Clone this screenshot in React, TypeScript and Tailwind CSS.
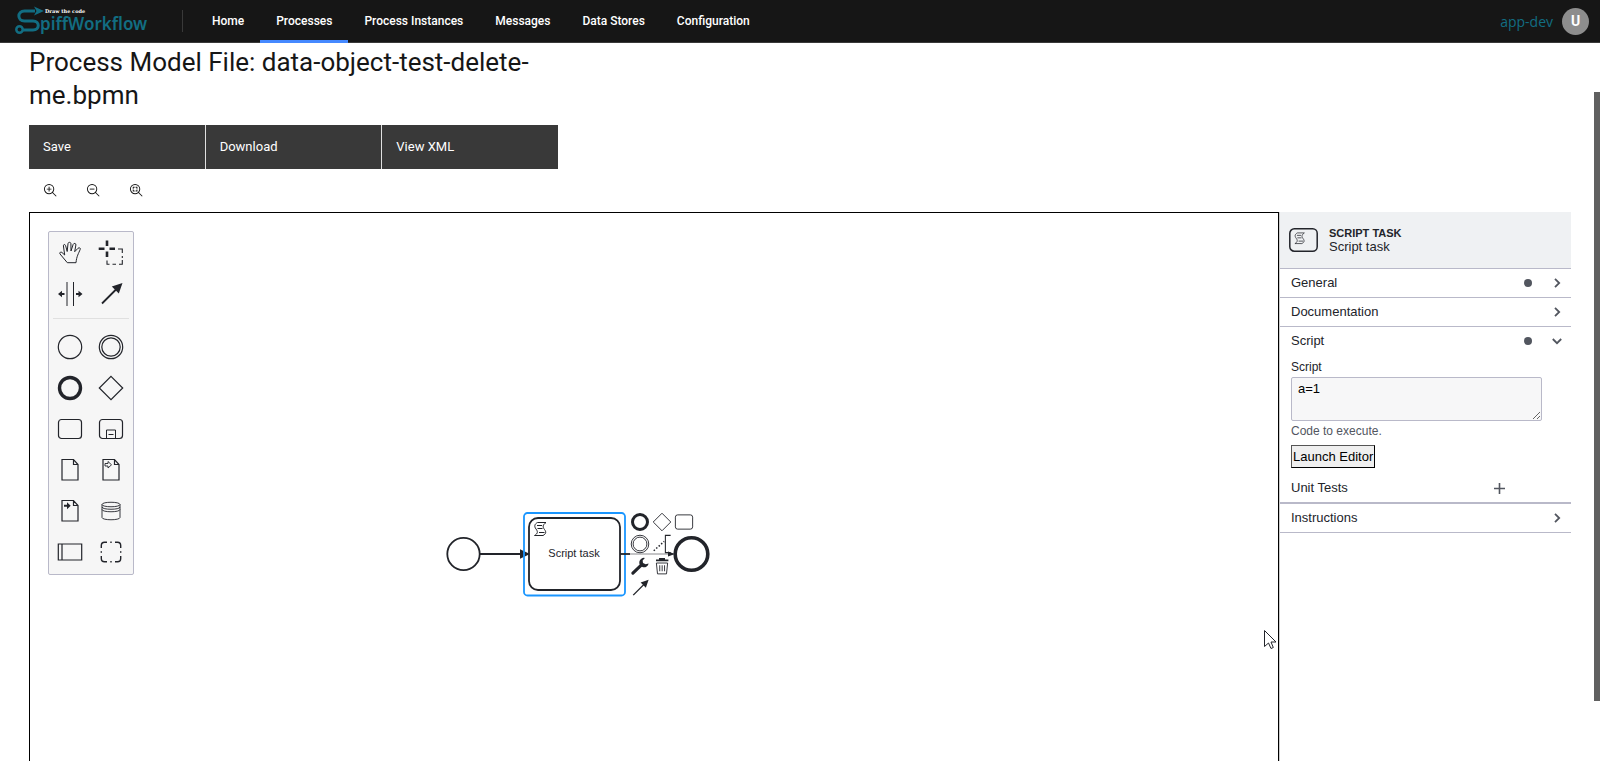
import type { ReactNode } from 'react';

const INK = '#22242a';

const navItems = ['Home', 'Processes', 'Process Instances', 'Messages', 'Data Stores', 'Configuration'];

function Logo() {
  return (
    <svg width="138" height="30" viewBox="0 0 138 30" role="img" aria-label="SpiffWorkflow">
      <g fill="none" stroke="#126d82" strokeWidth="3">
        <path d="M20 5H9.500C2 5 2 15 9.500 15H18C25 15 25 24 18 24H8" />
        <circle cx="4.500" cy="23.500" r="3.200" strokeWidth="2.500" />
      </g>
      <path d="M19 0.500L29 5L19 9.500L21.500 5Z" fill="#126d82" />
      <text x="30" y="7" className="fill-white font-['DejaVu_Serif'] text-[5px] font-bold">Draw the code</text>
      <text x="25" y="24" className="fill-[#126d82] font-['Noto_Sans'] text-[17px] font-semibold">piffWorkflow</text>
    </svg>
  );
}

function Header() {
  return (
    <header className="flex h-[43px] shrink-0 items-stretch border-b border-[#393939] bg-[#161616] pl-[15px] pr-[11px] text-white">
      <a href="#home" className="flex items-center">
        <Logo />
      </a>
      <div className="ml-[29px] mr-[13px] h-[22px] w-px self-center bg-[#393939]" />
      <nav className="-mb-px flex items-stretch text-[12px] font-medium">
        {navItems.map((item) => (
          <a
            key={item}
            href="#nav"
            className={
              item === 'Processes'
                ? 'flex items-center border-b-[3px] border-[#4589ff] px-4 pt-[2px]'
                : 'flex items-center border-b-[3px] border-transparent px-4 pt-[2px]'
            }
          >
            {item}
          </a>
        ))}
      </nav>
      <div className="ml-auto flex items-center gap-[9px]">
        <span className="font-['Open_Sans'] text-[14px] text-[#126d82]">app-dev</span>
        <button type="button" className="flex size-[27px] items-center justify-center rounded-full bg-[#8d8d8d] text-[14px] font-bold">
          U
        </button>
      </div>
    </header>
  );
}

function ZoomIcon({ children }: { children: ReactNode }) {
  return (
    <svg width="15" height="15" viewBox="0 0 32 32" fill="#161616">
      <path d="M21.4479,20A10.856,10.856,0,0,0,24,13,11,11,0,1,0,13,24a10.856,10.856,0,0,0,7-2.5521L27.5859,29,29,27.5859ZM13,22a9,9,0,1,1,9-9A9.01,9.01,0,0,1,13,22Z" />
      {children}
    </svg>
  );
}

function ZoomBar() {
  const button = 'flex h-[43px] w-[43px] items-center justify-center';
  return (
    <div className="flex">
      <button type="button" aria-label="Zoom in" className={button}>
        <ZoomIcon>
          <path d="M18 12h-4V8h-2v4H8v2h4v4h2v-4h4z" />
        </ZoomIcon>
      </button>
      <button type="button" aria-label="Zoom out" className={button}>
        <ZoomIcon>
          <path d="M8 12h10v2H8z" />
        </ZoomIcon>
      </button>
      <button type="button" aria-label="Zoom to fit" className={button}>
        <ZoomIcon>
          <path d="M8 8h4v2h-2v2H8zM14 8h4v4h-2v-2h-2zM8 14h2v2h2v2H8zM16 14h2v4h-4v-2h2z" />
        </ZoomIcon>
      </button>
    </div>
  );
}

const page = 'M4 1.500H15.500L20 6.500V22H4Z M15.500 1.500V6.500H20';

const icons: Record<string, ReactNode> = {
  'Hand tool': (
    <path
      d="M9.300 21.700L1.900 12.800C1.200 11.400 3 10.500 4 11.500L6.700 14L5.400 4.800C5.300 3.200 7.200 3.100 7.600 4.600L9.200 10.500L10 2.600C10.200 0.900 12.800 0.900 12.900 2.600L13 10L15.200 3.300C15.800 1.800 18.200 2.300 17.900 3.900L16.700 10.700L20 7.300C21.200 6.200 22.800 7 22.200 8.400C20.600 12.400 18.600 15.200 18 21.700Z"
      strokeWidth="1"
    />
  ),
  'Lasso tool': (
    <>
      <path d="M8 -0.500V5M8 10.500V16M-0.300 7.700H5.500M10.500 7.700H16" strokeWidth="2.600" />
      <path d="M19 8H23.300V12M23.300 15V17M23.300 19V23.300H20M17 23.300H13.500M10.500 23.300H8V19.500" strokeWidth="1.100" />
    </>
  ),
  'Space tool': (
    <>
      <path d="M9 0V24M15.500 0V24" strokeWidth="1" />
      <path d="M0 12L4 8.800V11H6.500V13H4V15.200ZM24.500 12L20.500 8.800V11H18V13H20.500V15.200Z" fill={INK} stroke="none" />
    </>
  ),
  'Connect tool': (
    <>
      <path d="M3 21.500L17 7.500" strokeWidth="1.800" />
      <path d="M23.500 1L19.800 11.500L12.800 4.500Z" fill={INK} stroke="none" />
    </>
  ),
  'Start event': <circle cx="12" cy="12" r="11.700" strokeWidth="1.200" />,
  'Intermediate event': (
    <>
      <circle cx="12" cy="12" r="11.700" strokeWidth="1.200" />
      <circle cx="12" cy="12" r="9.200" strokeWidth="1.200" />
    </>
  ),
  'End event': <circle cx="12" cy="12" r="10.500" strokeWidth="3.400" />,
  Gateway: <path d="M12 0.300L23.700 12L12 23.700L0.300 12Z" strokeWidth="1.200" />,
  Task: <rect x="0.500" y="2.500" width="23" height="19" rx="3" strokeWidth="1.200" />,
  'Sub-process': (
    <>
      <rect x="0.500" y="2.500" width="23" height="19" rx="3" strokeWidth="1.200" />
      <path d="M7.500 21.500V13H16.500V21.500M9.500 17.500H14.500" strokeWidth="1" />
    </>
  ),
  'Data object': <path d={page} strokeWidth="1.200" />,
  'Data input': (
    <>
      <path d={page} strokeWidth="1.200" />
      <path d="M6 5.500H9V3.500L12.500 6.800L9 10V8H6Z" strokeWidth="0.900" />
    </>
  ),
  'Data output': (
    <>
      <path d={page} strokeWidth="1.200" />
      <path d="M6 5.800H9V3.300L12.700 6.800L9 10.300V7.800H6Z" fill={INK} stroke="none" />
    </>
  ),
  'Data store': (
    <path
      d="M3 5.500C3 2.500 21 2.500 21 5.500V18.500C21 21.500 3 21.500 3 18.500ZM3 5.500C3 8.500 21 8.500 21 5.500M3 8C3 11 21 11 21 8M3 10.500C3 13.500 21 13.500 21 10.500"
      strokeWidth="0.900"
    />
  ),
  Participant: <path d="M0.300 4H23.700V20H0.300ZM4 4V20" strokeWidth="1.200" />,
  Group: (
    <path
      d="M2.300 8V5.500Q2.300 2.300 5.500 2.300H8M16 2.300H18.500Q21.700 2.300 21.700 5.500V8M21.700 16V18.500Q21.700 21.700 18.500 21.700H16M8 21.700H5.500Q2.300 21.700 2.300 18.500V16M11.300 2.300H12.700M11.300 21.700H12.700M2.300 11.300V12.700M21.700 11.300V12.700"
      strokeWidth="1.400"
    />
  ),
};

function PaletteIcon({ name }: { name: string }) {
  return (
    <button type="button" title={name} aria-label={name} className="flex h-[41px] items-center justify-center">
      <svg width="24" height="24" viewBox="0 0 24 24" fill="none" stroke={INK} className="overflow-visible">
        {icons[name]}
      </svg>
    </button>
  );
}

function Palette() {
  const names = Object.keys(icons);
  return (
    <div className="absolute left-[18px] top-[18px] w-[86px] rounded-[2px] border border-[#b9b9c9] bg-[#f6f6f6] pb-[2px] pr-[2px]">
      <div className="grid grid-cols-2">
        {names.slice(0, 4).map((n) => (
          <PaletteIcon key={n} name={n} />
        ))}
      </div>
      <hr className="mb-[7px] ml-1 mr-[2px] mt-1 border-[#e0e0e0]" />
      <div className="grid grid-cols-2">
        {names.slice(4).map((n) => (
          <PaletteIcon key={n} name={n} />
        ))}
      </div>
    </div>
  );
}

function ScriptGlyph() {
  return (
    <path d="M3.500 0.500H12C8.500 3 8.500 5 10.500 7.500C12.500 10 12 12 9 13.500H0.500C4 11.500 4 9.500 2 7C0 4.500 0.500 2 3.500 0.500ZM3 3.500H8M3.500 6.500H8.500M5 10.500H10.500" />
  );
}

function Diagram() {
  return (
    <svg className="absolute left-[400px] top-[290px]" width="280" height="100" viewBox="0 0 280 100" fill="none" stroke={INK}>
      <circle cx="33.500" cy="51" r="16.200" strokeWidth="1.800" />
      <path d="M50 51H92" strokeWidth="1.800" />
      <path d="M90 46.300L100 51L90 55.700Z" fill={INK} stroke="none" />
      <rect x="94" y="10" width="101" height="82.500" rx="3.500" stroke="#1a96ff" strokeWidth="1.800" />
      <rect x="99" y="15" width="91" height="72" rx="9" strokeWidth="1.800" />
      <g transform="translate(104 19)" strokeWidth="1">
        <ScriptGlyph />
      </g>
      <text x="144" y="54" textAnchor="middle" fill={INK} stroke="none" className="font-['Liberation_Sans'] text-[11px]">
        Script task
      </text>
      <path d="M190 51H200" strokeWidth="1.800" />
      <path d="M200 51H243" strokeWidth="1.800" stroke="#c4c4c6" />
      <path d="M238 48.500L245 51L238 53.500Z" fill={INK} stroke="none" />
      <circle cx="261.500" cy="51" r="16.300" strokeWidth="3.600" />
    </svg>
  );
}

const padIcons: { name: string; drawing: ReactNode }[] = [
  { name: 'Append end event', drawing: <circle cx="12" cy="12" r="10" strokeWidth="4" /> },
  { name: 'Append gateway', drawing: icons['Gateway'] },
  { name: 'Append task', drawing: icons['Task'] },
  { name: 'Append intermediate event', drawing: icons['Intermediate event'] },
  {
    name: 'Add text annotation',
    drawing: (
      <>
        <path d="M23.500 0.500H16.500V23.500H23.500" strokeWidth="1.400" />
        <path d="M1 21L15 8.500" strokeWidth="2" strokeDasharray="2 2.400" />
      </>
    ),
  },
  { name: '', drawing: null },
  {
    name: 'Change element',
    drawing: (
      <>
        <path d="M2.500 21.500L14 10.500" strokeWidth="4.200" strokeLinecap="round" />
        <path d="M18.500 1.200A6.300 6.300 0 1 0 23.500 8.500L19.500 9.500L16 8L15.500 4.500Z" fill={INK} stroke="none" />
      </>
    ),
  },
  {
    name: 'Delete',
    drawing: (
      <>
        <path d="M4 4.500H20.500M8 2.300H16" strokeWidth="2.200" />
        <path d="M4.500 8H19.500L18 22.500H6ZM9 11V19M12.200 11V19M15.400 11V19" strokeWidth="1.200" />
      </>
    ),
  },
  { name: '', drawing: null },
  { name: 'Connect', drawing: icons['Connect tool'] },
];

function ContextPad() {
  return (
    <div className="absolute left-[599px] top-[298px] grid grid-cols-[repeat(3,22px)] auto-rows-[22px]">
      {padIcons.map(({ name, drawing }, i) =>
        drawing ? (
          <button key={name} type="button" aria-label={name} className="flex items-center justify-center">
            <svg width="18" height="18" viewBox="0 0 24 24" fill="none" stroke={INK} className="overflow-visible">
              {drawing}
            </svg>
          </button>
        ) : (
          <span key={i} />
        ),
      )}
    </div>
  );
}

function Pointer() {
  return (
    <svg className="absolute right-[1px] top-[417px]" width="13" height="20" viewBox="0 0 13 20" fill="white" stroke={INK}>
      <path d="M0.500 0.500V16.500L4.500 13L7 18.500L9.300 17.500L7 12H12Z" />
    </svg>
  );
}

function Chevron({ open }: { open?: boolean }) {
  return (
    <svg width="10" height="10" viewBox="0 0 10 10" fill="none" stroke="#52565f" strokeWidth="1.800">
      <path d={open ? 'M0.800 3L5 7.200L9.200 3' : 'M3 0.800L7.200 5L3 9.200'} />
    </svg>
  );
}

function GroupRow({ label, dot, open }: { label: string; dot?: boolean; open?: boolean }) {
  return (
    <button type="button" aria-expanded={!!open} className="flex h-7 w-full items-center pl-[11px] pr-[9px] text-left">
      <span className="flex-1">{label}</span>
      {dot && <span className="mr-[20px] size-2 rounded-full bg-[#52565f]" />}
      <Chevron open={open} />
    </button>
  );
}

function PropertiesPanel() {
  return (
    <aside className="w-[292px] shrink-0 border-l border-[#ccc] font-['Liberation_Sans',sans-serif] text-[13px] text-[#22242a]">
      <div className="flex h-[57px] items-center gap-[11px] border-b border-[#b9b9c9] bg-[#eff1f3] pl-[9px]">
        <svg width="29" height="24" viewBox="0 0 29 24" fill="none" stroke={INK}>
          <rect x="0.800" y="0.800" width="27.400" height="22.400" rx="4.500" strokeWidth="1.500" />
          <g transform="translate(5.500 4.500) scale(0.820)" strokeWidth="0.900">
            <ScriptGlyph />
          </g>
        </svg>
        <div className="leading-[13px]">
          <div className="text-[11px] font-bold">SCRIPT TASK</div>
          <div>Script task</div>
        </div>
      </div>
      <div className="border-b border-[#b9b9c9]">
        <GroupRow label="General" dot />
      </div>
      <div className="border-b border-[#b9b9c9]">
        <GroupRow label="Documentation" />
      </div>
      <div className="border-b-2 border-[#b9b9c9]">
        <GroupRow label="Script" dot open />
        <div className="flex flex-col items-start pl-[11px] pr-[29px] pt-[2px]">
          <label htmlFor="script" className="text-[12px] leading-5">
            Script
          </label>
          <textarea
            id="script"
            defaultValue="a=1"
            className="block h-[44px] w-full rounded-[2px] border border-[#b9b9c9] bg-[#f7f7f8] px-[6px] py-[3px] leading-4 text-black"
          />
          <div className="text-[12px] leading-5 text-[#52565f]">Code to execute.</div>
          <button type="button" className="mt-1 h-[23px] border border-t-[#555] border-l-[#555] border-b-black border-r-black bg-[#efefef] px-px text-black">
            Launch Editor
          </button>
        </div>
        <div className="mt-[6px] flex h-7 items-center pl-[11px] pr-[66px]">
          <span className="flex-1">Unit Tests</span>
          <button type="button" aria-label="Add unit test">
            <svg width="11" height="11" viewBox="0 0 11 11" stroke="#52565f" strokeWidth="1.600">
              <path d="M5.500 0V11M0 5.500H11" />
            </svg>
          </button>
        </div>
      </div>
      <div className="border-b border-[#b9b9c9]">
        <GroupRow label="Instructions" />
      </div>
    </aside>
  );
}

export default function App() {
  return (
    <div className="flex h-screen flex-col overflow-hidden bg-white font-['Roboto',sans-serif] text-[#161616]">
      <Header />
      <div className="flex min-h-0 flex-1">
        <main className="flex min-w-0 flex-1 flex-col pl-[29px] pr-[23px]">
          <div className="w-[529px]">
            <h1 className="pt-[3px] text-[26px] font-normal leading-[33px]">Process Model File: data-object-test-delete-me.bpmn</h1>
            <div className="mt-[13px] grid h-[44px] grid-cols-3 gap-px bg-[#e0e0e0] text-[13px] text-white">
              {['Save', 'Download', 'View XML'].map((label) => (
                <button key={label} type="button" className="bg-[#393939] px-[14px] text-left">
                  {label}
                </button>
              ))}
            </div>
          </div>
          <ZoomBar />
          <div className="flex min-h-0 flex-1">
            <div className="relative min-w-0 flex-1 border-l border-r border-t border-black">
              <Palette />
              <Diagram />
              <ContextPad />
              <Pointer />
            </div>
            <PropertiesPanel />
          </div>
        </main>
        <div className="h-full w-[6px] pt-[49px]">
          <div className="h-[91%] bg-[#606060]" />
        </div>
      </div>
    </div>
  );
}
